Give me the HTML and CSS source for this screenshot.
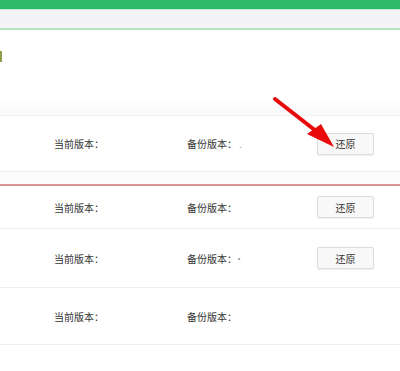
FILE: index.html
```html
<!DOCTYPE html>
<html>
  <head>
    <title>备份还原</title>
    <meta name="viewport" content="width=device-width, initial-scale=1" />
    <link rel="stylesheet" href="styles.css">
  </head>
  <body>
    <div class="topbar"></div>
    <div class="tabs"></div>
    <div class="head">
      <span class="head-mark"></span>
    </div>
    <div class="list">
      <div class="row row-first">
        <span class="col col-cur">当前版本：</span>
        <span class="col col-bak">备份版本：<i class="dot">.</i></span>
        <button class="restore">还原</button>
      </div>
      <div class="gap"></div>
      <div class="row row-short">
        <span class="col col-cur">当前版本：</span>
        <span class="col col-bak">备份版本：</span>
        <button class="restore">还原</button>
      </div>
      <div class="row row-tall">
        <span class="col col-cur">当前版本：</span>
        <span class="col col-bak">备份版本：<i class="dot">·</i></span>
        <button class="restore">还原</button>
      </div>
      <div class="row">
        <span class="col col-cur">当前版本：</span>
        <span class="col col-bak">备份版本：</span>
      </div>
    </div>

    <svg class="arrow" width="400" height="371" viewBox="0 0 400 371">
      <line x1="275" y1="99" x2="316" y2="131" stroke="#e8090b" stroke-width="4" stroke-linecap="round" />
      <polygon points="307,134 321,124 334,147" fill="#e8090b" />
    </svg>
  </body>
</html>
```

FILE: styles.css
```css
body {
  margin: 0;
  font-family: "Noto Sans CJK SC", "Noto Sans", sans-serif;
  font-size: 10px;
  color: #333;
  background-color: #ffffff;
  position: relative;
}
.topbar {
  height: 9px;
  background-color: #2eba68;
}
.tabs {
  height: 18px;
  background-color: #f4f3f7;
  border-top: 1px solid #c9ecd5;
  border-bottom: 2px solid #b3e6c4;
}
.head {
  height: 86px;
  border-bottom: 1px solid #f0f0f0;
  background: linear-gradient(#ffffff 80%, #f9f9f9);
  padding-top: 21px;
  box-sizing: border-box;
}
.head-mark {
  display: block;
  width: 2px;
  height: 11px;
  background-color: #8ea14a;
}
.row {
  display: flex;
  align-items: center;
  height: 57px;
  border-bottom: 1px solid #efefef;
  box-sizing: border-box;
}
.row-first {
  height: 56px;
}
.row-short {
  height: 43px;
}
.row-tall {
  height: 59px;
}
.gap {
  height: 14px;
  background-color: #fbfbfb;
  border-bottom: 2px solid #dc9390;
  box-sizing: border-box;
}
.col-cur {
  margin-left: 54px;
  width: 133px;
}
.col-bak {
  width: 130px;
}
.dot {
  font-style: normal;
  color: #999;
  margin-left: 2px;
}
.restore {
  width: 57px;
  height: 22px;
  padding: 0;
  font-family: inherit;
  font-size: 10px;
  color: #333;
  background-color: #f8f8f8;
  border: 1px solid #dcdcdc;
  border-radius: 2px;
  box-shadow: 0 1px 1px rgba(0, 0, 0, 0.06);
  cursor: pointer;
}
.arrow {
  position: absolute;
  left: 0;
  top: 0;
  pointer-events: none;
}
```
